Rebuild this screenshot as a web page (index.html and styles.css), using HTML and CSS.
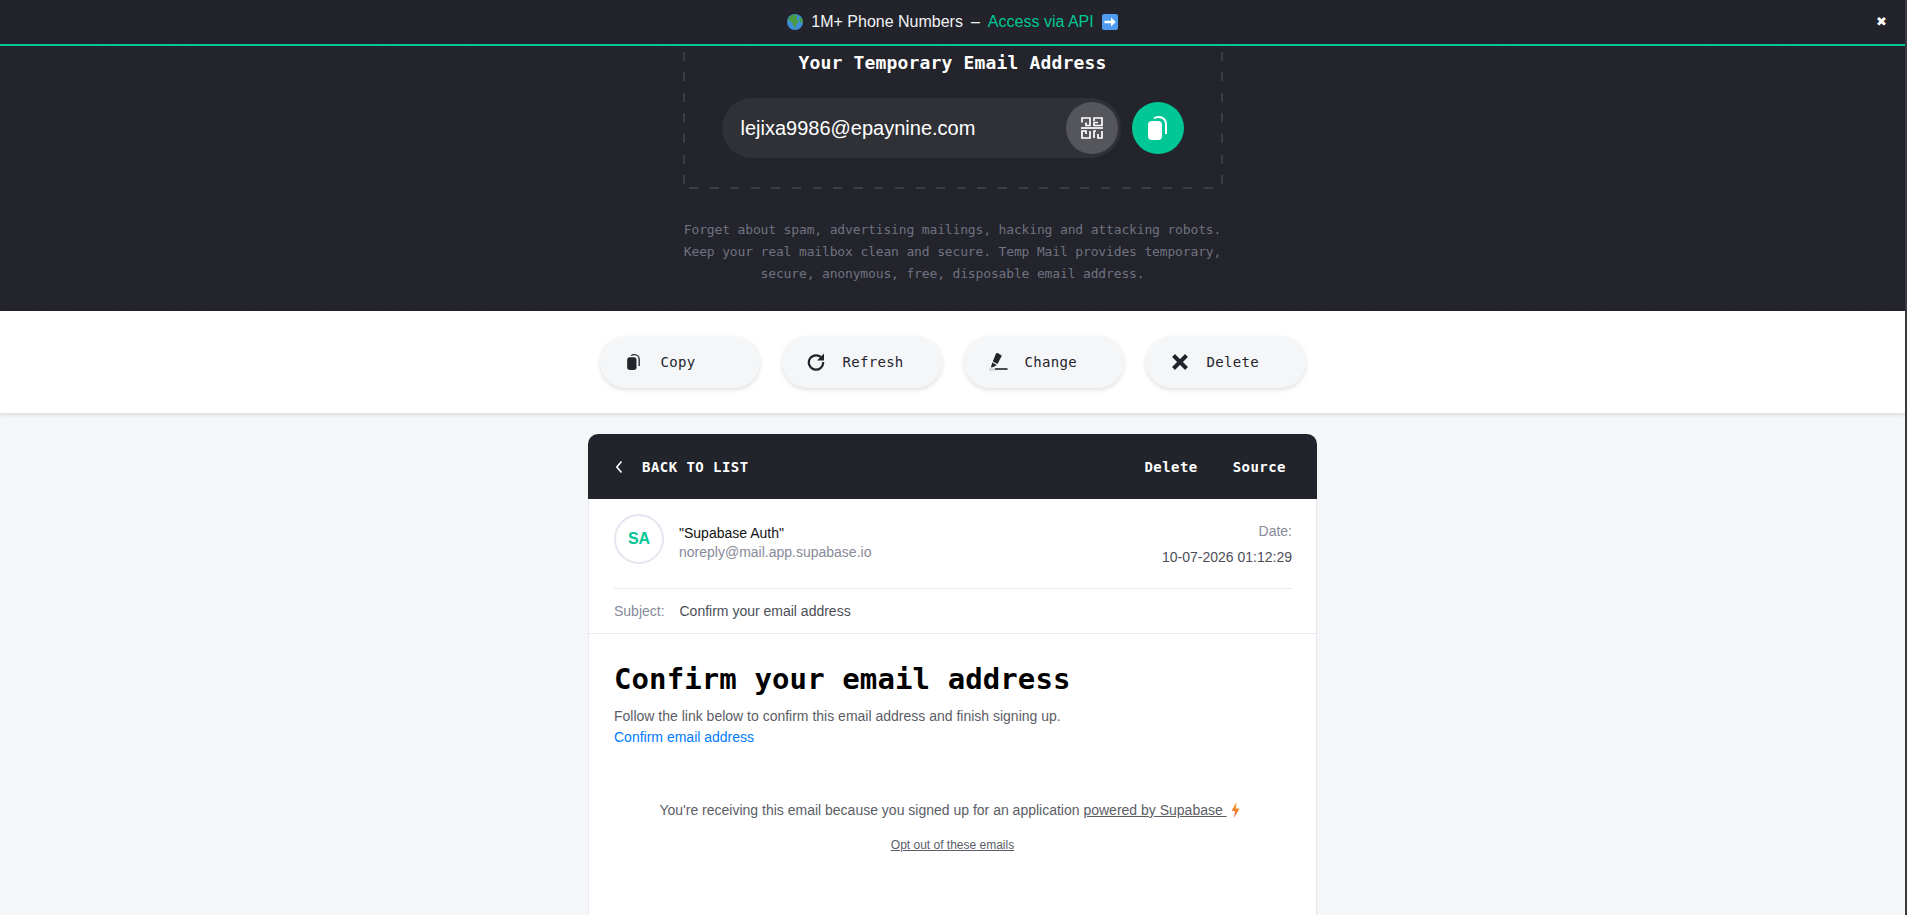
FILE: index.html
```html
<!DOCTYPE html>
<html lang="en">
<head>
    <meta charset="UTF-8">
    <title>Temp Mail</title>
    <link rel="stylesheet" href="styles.css">
</head>
<body>

    <div class="promo">
        <svg class="emoji" viewBox="0 0 16 16">
            <circle cx="8" cy="8" r="8" fill="#3f8fd8"/>
            <path d="M3 2.2 7 .6 10.5 1.6 9.5 5 12 7 9.5 10 8 14.5 6 11.5 5.5 8.5 2.5 7 .8 6Z" fill="#4a9a44"/>
            <path d="M12.5 2.5 15.4 5.5 15.8 9.5 13.5 8 12 5Z" fill="#4a9a44"/>
        </svg>
        <span>1M+ Phone Numbers</span>
        <span class="promo-dash">&ndash;</span>
        <a href="#" class="promo-link">Access via API</a>
        <svg class="emoji" viewBox="0 0 16 16">
            <rect width="16" height="16" rx="2" fill="#4f9cf0"/>
            <path d="M2.5 6.7H9V3.6L13.8 8 9 12.4V9.3H2.5Z" fill="#fff"/>
        </svg>
        <span class="promo-close">&#10006;</span>
    </div>

    <header class="hero">
        <div class="address-box">
            <h2>Your Temporary Email Address</h2>
            <div class="address-row">
                <div class="address-field">
                    <span class="address-text">lejixa9986@epaynine.com</span>
                    <button class="round-btn qr-btn">
                        <svg width="22" height="22" viewBox="0 0 22 22" fill="none" stroke="#fff" stroke-width="1.7">
                            <path d="M1 5.5V1H9V8.5H5V5.5"/>
                            <path d="M13 4V1H21V8.5H13V5.5H17"/>
                            <path d="M0 11H22"/>
                            <path d="M5 17V14H1V21H9V14"/>
                            <path d="M13 21V14H15M21 14V21H17V17"/>
                        </svg>
                    </button>
                </div>
                <button class="round-btn copy-btn">
                    <svg width="19" height="24" viewBox="0 0 19 24"><use href="#copy-shape"/></svg>
                </button>
            </div>
        </div>
        <p class="hero-text">
            Forget about spam, advertising mailings, hacking and attacking robots.<br>
            Keep your real mailbox clean and secure. Temp Mail provides temporary,<br>
            secure, anonymous, free, disposable email address.
        </p>
    </header>

    <nav class="toolbar">
        <a href="#" class="tool-btn">
            <span class="tool-icon">
                <svg width="13" height="16" viewBox="0 0 19 24"><use href="#copy-shape"/></svg>
            </span>
            <span>Copy</span>
        </a>
        <a href="#" class="tool-btn">
            <span class="tool-icon">
                <svg width="18" height="18" viewBox="0 0 18 18" fill="none" stroke="#22242c" stroke-width="2.2">
                    <path d="M14.8 5.2A7.2 7.2 0 1 0 16.2 9"/>
                    <path d="M17 .5V7.4H10.1Z" fill="#22242c" stroke="none"/>
                </svg>
            </span>
            <span>Refresh</span>
        </a>
        <a href="#" class="tool-btn">
            <span class="tool-icon">
                <svg width="20" height="20" viewBox="0 0 20 20">
                    <path d="M9.5 1 13 3C13.6 3.4 13.7 4 13.4 4.6L9.5 12 4.8 9.6 8 1.6C8.3 1 8.9.8 9.5 1Z" fill="#22242c"/>
                    <path d="M4.3 10.6 8.8 13 5.5 15 2.8 15.6Z" fill="#22242c"/>
                    <path d="M7 17H19.5" stroke="#22242c" stroke-width="1.6"/>
                    <path d="M1 17.5H7" stroke="#d2d3d6" stroke-width="2.4"/>
                </svg>
            </span>
            <span>Change</span>
        </a>
        <a href="#" class="tool-btn">
            <span class="tool-icon">
                <svg width="18" height="18" viewBox="0 0 18 18" fill="none" stroke="#22242c" stroke-width="4">
                    <path d="M2.5 2.5 15.5 15.5M15.5 2.5 2.5 15.5"/>
                </svg>
            </span>
            <span>Delete</span>
        </a>
    </nav>

    <main class="content">
        <section class="mail-card">
            <div class="mail-head">
                <a href="#" class="back-link">
                    <svg width="8" height="14" viewBox="0 0 8 14" fill="none" stroke="#fff" stroke-width="1.6">
                        <path d="M6.5 1.5 1.8 7 6.5 12.5"/>
                    </svg>
                    <span>BACK TO LIST</span>
                </a>
                <div class="head-links">
                    <a href="#">Delete</a>
                    <a href="#">Source</a>
                </div>
            </div>

            <div class="mail-meta">
                <div class="sender-row">
                    <div class="avatar">SA</div>
                    <div class="sender">
                        <div class="sender-name">"Supabase Auth"</div>
                        <div class="sender-mail">noreply@mail.app.supabase.io</div>
                    </div>
                    <div class="mail-date">
                        <div class="date-label">Date:</div>
                        <div class="date-value">10-07-2026 01:12:29</div>
                    </div>
                </div>
                <div class="subject-row">
                    <span class="subject-label">Subject:</span>
                    <span class="subject-text">Confirm your email address</span>
                </div>
            </div>

            <div class="mail-body">
                <h1>Confirm your email address</h1>
                <p class="mail-line">Follow the link below to confirm this email address and finish signing up.</p>
                <p class="mail-line"><a href="#" class="confirm-link">Confirm email address</a></p>
                <p class="mail-note">
                    You're receiving this email because you signed up for an application
                    <a href="#">powered by Supabase&nbsp;</a>
                    <svg class="bolt" width="9" height="16" viewBox="0 0 9 16">
                        <defs>
                            <linearGradient id="bolt-fill" x1="0" y1="0" x2="0" y2="1">
                                <stop offset="0" stop-color="#f5a623"/>
                                <stop offset="1" stop-color="#f0603a"/>
                            </linearGradient>
                        </defs>
                        <path d="M5.5 0 0.5 9H4L3 16 8.5 6.5H5Z" fill="url(#bolt-fill)"/>
                    </svg>
                </p>
                <p class="mail-optout"><a href="#">Opt out of these emails</a></p>
            </div>
        </section>
    </main>

    <svg class="defs" width="0" height="0">
        <defs>
            <g id="copy-shape">
                <path d="M6 2.4C7 1.4 9 1 11 1 15 1 18 4 18 8V18" fill="none" stroke="currentColor" stroke-width="2"/>
                <rect x="0" y="5" width="14" height="19" rx="4" fill="currentColor"/>
            </g>
        </defs>
    </svg>

</body>
</html>
```

FILE: styles.css
```css
html, body {
    height: 100%;
}

body {
    margin: 0;
    overflow: hidden;
    background-color: #f5f6f8;
    border-right: 2px solid #3a3a3e;
    font-family: "Liberation Sans", Arial, sans-serif;
    color: #22242c;
}

a {
    color: inherit;
    text-decoration: none;
}

button {
    border: 0;
    padding: 0;
    cursor: pointer;
}

.defs {
    position: absolute;
}

.promo {
    position: relative;
    z-index: 2;
    height: 44px;
    display: flex;
    align-items: center;
    justify-content: center;
    gap: 8px;
    font-size: 16px;
    color: #f2f3f5;
    background-color: #22232b;
    border-bottom: 2px solid #00c795;
}

.emoji {
    width: 16px;
    height: 16px;
}

.promo-link {
    color: #00c795;
}

.promo-close {
    position: absolute;
    top: 12px;
    right: 18px;
    font-size: 13px;
    line-height: 20px;
    color: #fff;
}

.hero {
    height: 265px;
    overflow: hidden;
    background-color: #22232b;
    background-image: repeating-linear-gradient(45deg, rgba(255, 255, 255, 0.012) 0 1px, transparent 1px 3px);
}

.address-box {
    box-sizing: border-box;
    width: 540px;
    height: 164px;
    margin: -21px auto 0;
    padding: 25px 2px 0;
    background-image:
        repeating-linear-gradient(90deg, transparent 0 6px, #3b3c44 6px 15px, transparent 15px 20.6px),
        repeating-linear-gradient(180deg, transparent 0 6px, #3b3c44 6px 15px, transparent 15px 20.6px),
        repeating-linear-gradient(180deg, transparent 0 6px, #3b3c44 6px 15px, transparent 15px 20.6px);
    background-size: 100% 2px, 2px 100%, 2px 100%;
    background-position: left bottom, left top, right top;
    background-repeat: no-repeat;
}

.address-box h2 {
    margin: 0;
    text-align: center;
    font-family: "DejaVu Sans Mono", monospace;
    font-size: 18px;
    line-height: 26px;
    letter-spacing: 0.17px;
    color: #fff;
}

.address-row {
    display: flex;
    align-items: center;
    gap: 11px;
    margin: 22px 0 0 37px;
}

.address-field {
    box-sizing: border-box;
    width: 399px;
    height: 60px;
    padding: 0 3px 0 19px;
    display: flex;
    align-items: center;
    justify-content: space-between;
    border-radius: 30px;
    background-color: #303136;
}

.address-text {
    font-size: 20px;
    color: #fff;
}

.round-btn {
    width: 52px;
    height: 52px;
    display: flex;
    align-items: center;
    justify-content: center;
    border-radius: 50%;
}

.qr-btn {
    background-color: #55555c;
}

.copy-btn {
    background-color: #00c795;
    color: #fff;
}

.hero-text {
    margin: 30px 0 0;
    text-align: center;
    font-family: "DejaVu Sans Mono", monospace;
    font-size: 13px;
    line-height: 22px;
    letter-spacing: -0.15px;
    color: #6f7280;
}

.toolbar {
    position: relative;
    height: 102px;
    display: flex;
    justify-content: center;
    align-items: center;
    gap: 22px;
    background-color: #fff;
    box-shadow: 0 2px 4px rgba(30, 32, 40, 0.12);
}

.tool-btn {
    box-sizing: border-box;
    width: 160px;
    height: 52px;
    padding-left: 24px;
    display: flex;
    align-items: center;
    gap: 17px;
    border-radius: 26px;
    background-color: #f5f6f8;
    box-shadow: 0 2px 4px rgba(30, 32, 40, 0.14);
    color: #22242c;
    font-family: "DejaVu Sans Mono", monospace;
    font-size: 14px;
    letter-spacing: 0.3px;
}

.tool-icon {
    width: 20px;
    display: flex;
    justify-content: center;
}

.content {
    display: flex;
    justify-content: center;
    padding-top: 21px;
}

.mail-card {
    box-sizing: border-box;
    width: 729px;
    height: 481px;
    background-color: #fff;
    border: 1px solid #e8e8f0;
    border-top: 0;
    border-bottom: 0;
    border-radius: 10px 10px 0 0;
}

.mail-head {
    height: 65px;
    margin: 0 -1px;
    padding: 0 31px 0 27px;
    display: flex;
    align-items: center;
    justify-content: space-between;
    background-color: #22242c;
    border-radius: 10px 10px 0 0;
    color: #fff;
    font-family: "DejaVu Sans Mono", monospace;
    font-size: 14px;
    font-weight: bold;
    letter-spacing: 0.45px;
}

.back-link {
    display: flex;
    align-items: center;
    gap: 19px;
}

.head-links {
    display: flex;
    gap: 35px;
}

.mail-meta {
    box-sizing: border-box;
    height: 135px;
    margin: 0 -1px;
    padding: 15px 25px 0 26px;
    border-bottom: 1px solid #e8e8f0;
}

.sender-row {
    display: flex;
    height: 74px;
    border-bottom: 1px solid #e8e8f0;
}

.avatar {
    box-sizing: border-box;
    width: 50px;
    height: 50px;
    display: flex;
    align-items: center;
    justify-content: center;
    border: 2px solid #e6e6f0;
    border-radius: 50%;
    font-size: 16px;
    font-weight: bold;
    color: #00c795;
}

.sender {
    margin-left: 15px;
    font-size: 14px;
}

.sender-name {
    margin-top: 9px;
    line-height: 20px;
    color: #111;
}

.sender-mail {
    margin-top: -1px;
    line-height: 20px;
    color: #878a99;
}

.mail-date {
    margin-left: auto;
    text-align: right;
    font-size: 14px;
}

.date-label {
    margin-top: 7px;
    line-height: 20px;
    color: #878a99;
}

.date-value {
    margin-top: 6px;
    line-height: 20px;
    color: #4c4e57;
}

.subject-row {
    margin-top: 12px;
    font-size: 14px;
    line-height: 20px;
}

.subject-label {
    color: #878a99;
    margin-right: 11px;
}

.subject-text {
    color: #4c4e57;
}

.mail-body {
    padding: 25px 25px 0;
    font-size: 14px;
    color: #5b5d66;
}

.mail-body h1 {
    margin: 0 0 7px;
    font-family: "DejaVu Sans Mono", monospace;
    font-size: 29px;
    line-height: 40px;
    letter-spacing: 0.1px;
    color: #000;
}

.mail-line {
    margin: 0;
    line-height: 21px;
}

.confirm-link {
    color: #007bff;
}

.mail-note {
    margin: 52px 0 0;
    padding-right: 6px;
    text-align: center;
    line-height: 20px;
}

.mail-note a,
.mail-optout a {
    text-decoration: underline;
}

.bolt {
    vertical-align: -3px;
}

.mail-optout {
    margin: 17px 0 0;
    text-align: center;
    font-size: 12px;
    line-height: 16px;
}
```
